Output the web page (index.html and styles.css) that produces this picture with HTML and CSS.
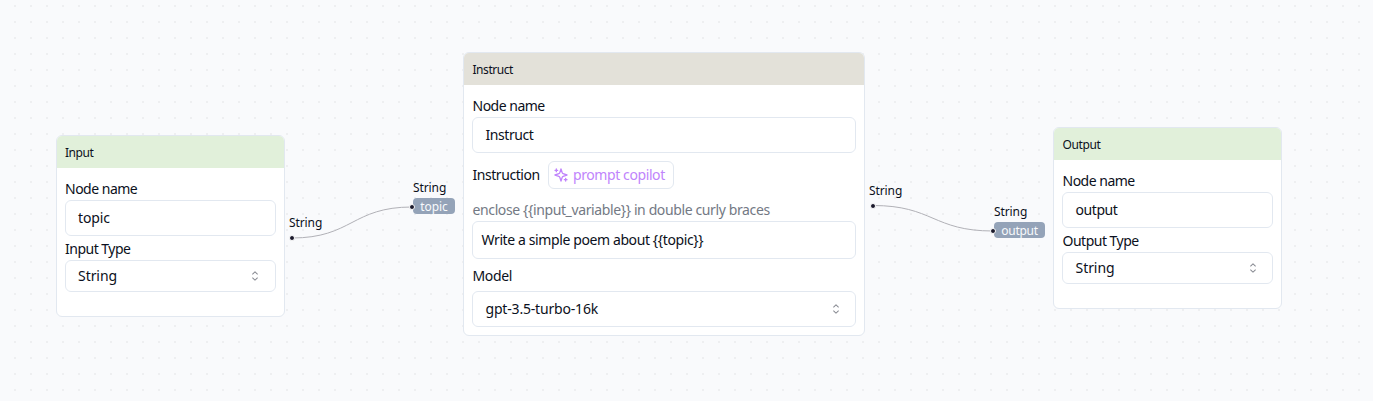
FILE: index.html
```html
<!DOCTYPE html>
<html lang="en">
<head>
<meta charset="utf-8">
<title>Flow editor</title>
<link rel="stylesheet" href="styles.css">
</head>
<body>
<svg width="0" height="0" class="defs">
  <symbol id="chevrons" viewBox="0 0 15 15"><path d="M4.93179 5.43179C4.75605 5.60753 4.75605 5.89245 4.93179 6.06819C5.10753 6.24392 5.39245 6.24392 5.56819 6.06819L7.49999 4.13638L9.43179 6.06819C9.60753 6.24392 9.89245 6.24392 10.0682 6.06819C10.2439 5.89245 10.2439 5.60753 10.0682 5.43179L7.81819 3.18179C7.73379 3.0974 7.61933 3.04999 7.49999 3.04999C7.38064 3.04999 7.26618 3.0974 7.18179 3.18179L4.93179 5.43179ZM10.0682 9.56819C10.2439 9.39245 10.2439 9.10753 10.0682 8.93179C9.89245 8.75606 9.60753 8.75606 9.43179 8.93179L7.49999 10.8636L5.56819 8.93179C5.39245 8.75606 5.10753 8.75606 4.93179 8.93179C4.75605 9.10753 4.75605 9.39245 4.93179 9.56819L7.18179 11.8182C7.35753 11.9939 7.64245 11.9939 7.81819 11.8182L10.0682 9.56819Z" fill="currentColor"/></symbol>
</svg>
<main class="canvas">
  <svg class="edges" width="1373" height="401" fill="none">
    <path d="M292 238C352 238 352 207 412 207"/>
    <path d="M873 205.500C933 205.500 933 231 993 231"/>
  </svg>

  <section class="node node-input">
    <header class="node-head green">Input</header>
    <div class="node-body">
      <label class="label">Node name</label>
      <div class="field value-sm">topic</div>
      <label class="label">Input Type</label>
      <div class="field select short"><span>String</span><svg class="chev"><use href="#chevrons"/></svg></div>
    </div>
  </section>

  <section class="node node-instruct">
    <header class="node-head stone">Instruct</header>
    <div class="node-body">
      <label class="label">Node name</label>
      <div class="field">Instruct</div>
      <div class="row">
        <span class="row-label">Instruction</span>
        <button class="copilot"><svg class="spark" viewBox="0 0 24 24"><path d="m12 3-1.900 5.800a2 2 0 0 1-1.300 1.300L3 12l5.800 1.900a2 2 0 0 1 1.300 1.300L12 21l1.900-5.800a2 2 0 0 1 1.300-1.300L21 12l-5.800-1.900a2 2 0 0 1-1.300-1.300L12 3Z"/><path d="M5 3v4M19 17v4M3 5h4M17 19h4"/></svg><span>prompt copilot</span></button>
      </div>
      <div class="hint">enclose {{input_variable}} in double curly braces</div>
      <div class="field area">Write a simple poem about {{topic}}</div>
      <label class="label model">Model</label>
      <div class="field select"><span class="model-name">gpt-3.5-turbo-16k</span><svg class="chev"><use href="#chevrons"/></svg></div>
    </div>
  </section>

  <section class="node node-output">
    <header class="node-head green">Output</header>
    <div class="node-body">
      <label class="label">Node name</label>
      <div class="field">output</div>
      <label class="label">Output Type</label>
      <div class="field select short"><span>String</span><svg class="chev"><use href="#chevrons"/></svg></div>
    </div>
  </section>

  <div class="port port-a"><span>String</span></div>
  <div class="port port-b"><span>String</span><b class="tag">topic</b></div>
  <div class="port port-c"><span>String</span></div>
  <div class="port port-d"><span>String</span><b class="tag wide">output</b></div>
  <i class="dot dot-a"></i><i class="dot dot-b"></i><i class="dot dot-c"></i><i class="dot dot-d"></i>
</main>
</body>
</html>
```
FILE: styles.css
```css
* { box-sizing: border-box; }
body { margin: 0; font: 14px/20px "Noto Sans", sans-serif; color: #0b1020; }
.defs { position: absolute; }
.canvas {
  position: relative; width: 1373px; height: 401px; overflow: hidden;
  background: conic-gradient(from 90deg at 14px 14px, #eeeff1 90deg, transparent 0) 0 -9px / 16px 16px #f9fafc;
}
.edges { position: absolute; inset: 0; stroke: #b1b1b7; stroke-width: 1; }
.node {
  position: absolute; width: 229px; height: 182px; overflow: hidden;
  background: #fff; border: 1px solid #e2e8f0; border-radius: 6px;
}
.node-input { left: 56px; top: 135px; --nudge: 0px; }
.node-instruct { left: 463px; top: 52px; width: 402px; height: 284px; --nudge: .5px; }
.node-output { left: 1053px; top: 127px; --nudge: .5px; }
.node-head { height: 32px; padding: 0 calc(8px + var(--nudge)); font-size: 12px; line-height: 34px; letter-spacing: -.45px; }
.node-output .node-head { letter-spacing: -.4px; }
.green { background: #e1f0da; }
.stone { background: #e3e1d9; }
.node-body { display: flex; flex-direction: column; padding: 8px; }
.label { height: 24px; padding-left: var(--nudge); line-height: 26px; letter-spacing: -.5px; }
.field {
  display: flex; align-items: center; height: 36px; padding: 0 calc(12px - var(--nudge)) 0 calc(12px + var(--nudge));
  border: 1px solid #e2e8f0; border-radius: 6px; background: #fff; letter-spacing: -.42px;
}
.value-sm { letter-spacing: -.1px; }
.select { justify-content: space-between; letter-spacing: -.05px; }
.model-name { letter-spacing: -.18px; }
.short { height: 32px; }
.chev { width: 16px; height: 16px; opacity: .5; }
.row { display: flex; align-items: center; height: 28px; margin-top: 8px; }
.row-label { width: 76px; padding-left: .5px; letter-spacing: -.45px; }
.copilot {
  display: flex; align-items: center; gap: 4px; width: 126px; height: 28px; padding: 0 4px;
  border: 1px solid #e2e8f0; border-radius: 6px; background: #fff;
  color: #c084fc; font: inherit; letter-spacing: -.41px; white-space: nowrap;
}
.spark { width: 16px; height: 16px; fill: none; stroke: currentColor; stroke-width: 2; stroke-linecap: round; stroke-linejoin: round; flex: none; }
.hint { height: 20px; margin-top: 12px; padding-left: .5px; color: #737984; line-height: 18px; letter-spacing: -.38px; }
.area { height: 38px; padding: 0 8px 0 8.5px; letter-spacing: -.39px; }
.model { height: 32px; line-height: 34px; letter-spacing: -.35px; }
.port { position: absolute; display: flex; flex-direction: column; align-items: flex-start; font-size: 12px; line-height: 18px; letter-spacing: -.1px; }
.port-a { left: 289px; top: 214px; }
.port-b { left: 413px; top: 179px; }
.port-c { left: 869px; top: 182px; }
.port-d { left: 994px; top: 203px; }
.tag { width: 42px; height: 16px; margin-top: 1px; border-radius: 4px; background: #94a3b8; color: #f8fafc; font-weight: 400; line-height: 18px; text-align: center; }
.wide { width: 51px; letter-spacing: -.3px; }
.dot { position: absolute; width: 6px; height: 6px; border: 1px solid #fff; border-radius: 50%; background: #1a192b; }
.dot-a { left: 289px; top: 235px; }
.dot-b { left: 409px; top: 204px; }
.dot-c { left: 870px; top: 203px; }
.dot-d { left: 990px; top: 228px; }
```
